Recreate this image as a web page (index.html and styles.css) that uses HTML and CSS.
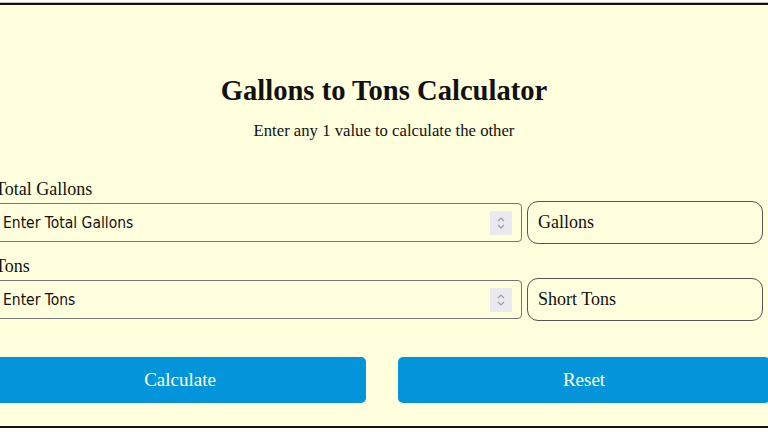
FILE: index.html
```html
<!DOCTYPE html>
<html lang="en">
<head>
<meta charset="utf-8">
<title>Gallons to Tons Calculator</title>
<link rel="stylesheet" href="styles.css">
</head>
<body>
<main class="card">
  <h1 class="title">Gallons to Tons Calculator</h1>
  <p class="subtitle">Enter any 1 value to calculate the other</p>
  <div class="field">
    <label class="label" for="gal">Total Gallons</label>
    <div class="row">
      <div class="num">
        <input id="gal" class="num-input" type="text" placeholder="Enter Total Gallons">
        <span class="spin"><svg width="10" height="16" viewBox="0 0 10 16"><path d="M2 6 L5 3 L8 6 M2 10 L5 13 L8 10" fill="none" stroke="#9a9aa6" stroke-width="1.2"/></svg></span>
      </div>
      <div class="unit">Gallons</div>
    </div>
  </div>
  <div class="field">
    <label class="label" for="tons">Tons</label>
    <div class="row">
      <div class="num">
        <input id="tons" class="num-input" type="text" placeholder="Enter Tons">
        <span class="spin"><svg width="10" height="16" viewBox="0 0 10 16"><path d="M2 6 L5 3 L8 6 M2 10 L5 13 L8 10" fill="none" stroke="#9a9aa6" stroke-width="1.2"/></svg></span>
      </div>
      <div class="unit">Short Tons</div>
    </div>
  </div>
  <div class="buttons">
    <button class="btn" type="button">Calculate</button>
    <button class="btn" type="button">Reset</button>
  </div>
</main>
</body>
</html>
```
FILE: styles.css
```css
html, body {
  margin: 0;
  padding: 0;
  background: #ffffff;
  overflow: hidden;
}
body {
  padding-top: 3px;
  font-family: "Liberation Serif", "Times New Roman", serif;
  color: #111;
}
.card {
  box-sizing: border-box;
  width: 784px;
  height: 425px;
  margin-left: -8px;
  border: 2px solid #111;
  box-shadow: 0 -1px 0 #bbb;
  background: #fffedd;
  padding: 69px 0 0 0;
}
.title {
  margin: 0;
  text-align: center;
  font-size: 28.6px;
  font-weight: bold;
  line-height: 34px;
}
.subtitle {
  margin: 12px 0 0 0;
  text-align: center;
  font-size: 16.7px;
  line-height: 22px;
}
.subtitle + .field {
  margin-top: 36px;
}
.label {
  display: block;
  font-size: 18px;
  line-height: 22px;
  padding-left: 1px;
}
.row {
  display: flex;
  align-items: center;
  gap: 5px;
  margin-top: 1px;
  margin-bottom: 11px;
}
.num {
  box-sizing: border-box;
  width: 528px;
  height: 39px;
  border: 1px solid #767676;
  border-radius: 0 4px 4px 0;
  display: flex;
  align-items: center;
  padding: 0 9px 0 8px;
}
.num-input {
  flex: 1;
  border: none;
  background: transparent;
  outline: none;
  padding: 0;
  font-family: "DejaVu Sans", sans-serif;
  font-stretch: condensed;
  font-size: 15.5px;
  color: #111;
}
.num-input::placeholder {
  color: #111;
  opacity: 1;
}
.spin {
  width: 22px;
  height: 24px;
  background: #e9e9ef;
  display: flex;
  align-items: center;
  justify-content: center;
}
.unit {
  box-sizing: border-box;
  width: 236px;
  height: 43px;
  border: 1px solid #555;
  border-radius: 11px;
  display: flex;
  align-items: center;
  padding-left: 10px;
  font-size: 18px;
}
.buttons {
  display: flex;
  gap: 32px;
  margin-top: 36px;
}
.btn {
  width: 372px;
  height: 46px;
  border: none;
  border-radius: 5px;
  background: #0394da;
  color: #fff;
  font-family: "Liberation Serif", "Times New Roman", serif;
  font-size: 19px;
  padding: 0;
}
```
